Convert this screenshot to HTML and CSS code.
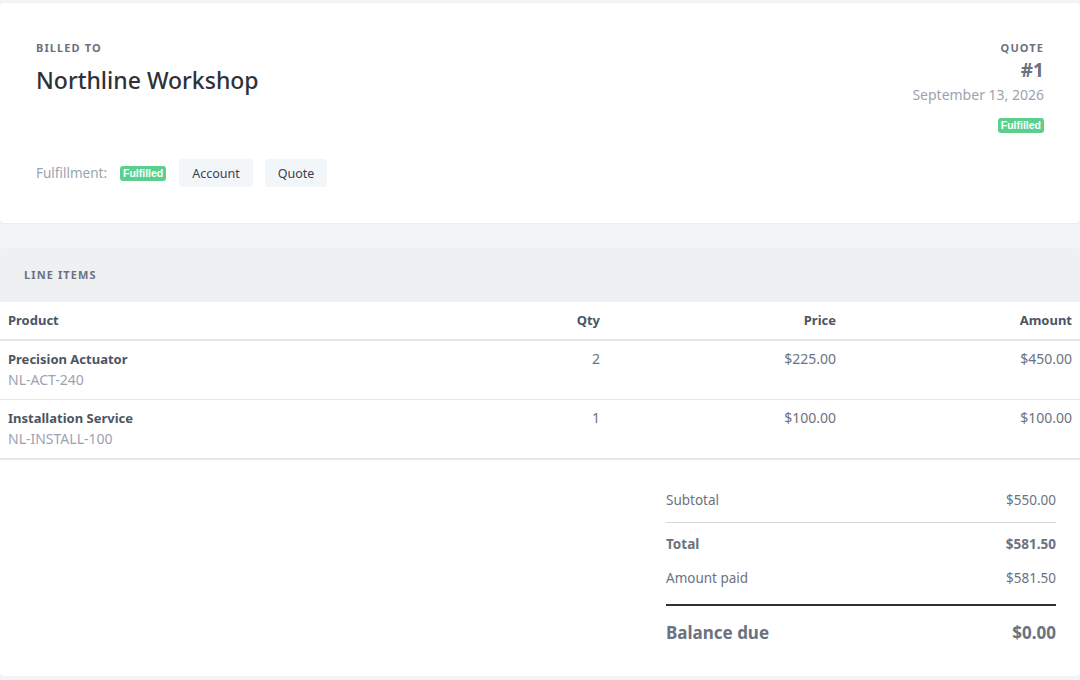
FILE: index.html
```html
<!DOCTYPE html>
<html>
<head>
<meta charset="utf-8">
<link rel="stylesheet" href="styles.css">
</head>
<body>
<div class="page">
  <section class="card top">
    <div class="top-head">
      <div class="billed">
        <div class="eyebrow">BILLED TO</div>
        <h1 class="client">Northline Workshop</h1>
      </div>
      <div class="quote-meta">
        <div class="eyebrow">QUOTE</div>
        <div class="quote-no">#1</div>
        <div class="quote-date">September 13, 2026</div>
        <span class="badge">Fulfilled</span>
      </div>
    </div>
    <div class="fulfil-row">
      <span class="fulfil-label">Fulfillment:</span>
      <span class="badge">Fulfilled</span>
      <button class="btn">Account</button>
      <button class="btn">Quote</button>
    </div>
  </section>

  <section class="card items">
    <div class="items-head"><span class="eyebrow">LINE ITEMS</span></div>
    <table class="lines">
      <colgroup>
        <col class="c-prod"><col class="c-qty"><col class="c-price"><col class="c-amt">
      </colgroup>
      <thead>
        <tr><th class="l">Product</th><th class="r">Qty</th><th class="r">Price</th><th class="r">Amount</th></tr>
      </thead>
      <tbody>
        <tr>
          <td class="l"><div class="pname">Precision Actuator</div><div class="sku">NL-ACT-240</div></td>
          <td class="r num">2</td><td class="r num">$225.00</td><td class="r num">$450.00</td>
        </tr>
        <tr>
          <td class="l"><div class="pname">Installation Service</div><div class="sku">NL-INSTALL-100</div></td>
          <td class="r num">1</td><td class="r num">$100.00</td><td class="r num">$100.00</td>
        </tr>
      </tbody>
    </table>
    <div class="totals-wrap">
      <div class="totals">
        <div class="trow sub"><span>Subtotal</span><span>$550.00</span></div>
        <div class="trow total"><span>Total</span><span>$581.50</span></div>
        <div class="trow paid"><span>Amount paid</span><span>$581.50</span></div>
        <div class="trow due"><span>Balance due</span><span>$0.00</span></div>
      </div>
    </div>
  </section>
</div>
</body>
</html>
```

FILE: styles.css
```css
* { box-sizing: border-box; }
html, body { margin: 0; padding: 0; }
body {
  background: #f3f4f6;
  font-family: "Noto Sans", "Open Sans", sans-serif;
  color: #374151;
}
.page {
  padding-top: 3px;
  display: flex;
  flex-direction: column;
  gap: 25px;
}
.card {
  background: #fff;
  border-radius: 4px;
  box-shadow: 0 1px 2px rgba(0,0,0,0.04);
}
.top {
  padding: 38px 36px 0 36px;
  height: 220px;
}
.eyebrow {
  font-size: 11px;
  font-weight: 700;
  letter-spacing: 1.1px;
  color: #6b7280;
  line-height: 14px;
}
.top-head {
  display: flex;
  justify-content: space-between;
  align-items: flex-start;
}
.client {
  margin: 10px 0 0 0;
  font-size: 23px;
  font-weight: 500;
  color: #2d3139;
  line-height: 30px;
}
.quote-meta {
  display: flex;
  flex-direction: column;
  align-items: flex-end;
}
.quote-no {
  font-size: 19px;
  font-weight: 700;
  color: #6b7280;
  line-height: 24px;
  margin-top: 3px;
}
.quote-date {
  font-size: 14px;
  color: #9ca3af;
  line-height: 20px;
  margin-top: 3px;
}
.quote-meta .badge { margin-top: 13px; }
.badge {
  display: inline-block;
  background: #5bd08e;
  color: #fff;
  font-family: "Liberation Sans", Arial, sans-serif;
  font-weight: 700;
  font-size: 10.5px;
  line-height: 15px;
  padding: 0 3px;
  border-radius: 3px;
}
.fulfil-row {
  margin-top: 26px;
  display: flex;
  align-items: center;
  gap: 13px;
}
.fulfil-label {
  font-size: 13.5px;
  color: #9ca3af;
}
.btn {
  font-family: "Noto Sans", sans-serif;
  font-size: 12.5px;
  color: #374151;
  background: #f3f6f9;
  border: 0;
  border-radius: 3px;
  height: 28px;
  padding: 0 13px;
}
.fulfil-row .btn + .btn { margin-left: -1px; }
.items {
  height: 428px;
  overflow: hidden;
}
.items-head {
  background: #eef0f2;
  height: 54px;
  display: flex;
  align-items: center;
  padding-left: 24px;
}
.lines {
  width: 100%;
  border-collapse: collapse;
}
.c-qty { width: 120px; }
.c-price { width: 236px; }
.c-amt { width: 236px; }
.lines th {
  font-size: 13px;
  font-weight: 700;
  color: #4b5563;
  padding: 0 8px 1px 8px;
  height: 38px;
  border-bottom: 2px solid #e3e6ea;
}
.lines td {
  vertical-align: top;
  padding: 8px 8px 9px 8px;
  border-bottom: 1px solid #e3e6ea;
}
.lines tbody tr:last-child td { border-bottom: 2px solid #e3e6ea; }
.l { text-align: left; }
.r { text-align: right; }
.pname {
  font-size: 13px;
  font-weight: 700;
  color: #4b5563;
  line-height: 20px;
}
.sku {
  font-size: 14px;
  color: #9ca3af;
  line-height: 21px;
}
.num {
  font-size: 14px;
  color: #6b7280;
  line-height: 20px;
}
.totals-wrap {
  display: flex;
  justify-content: flex-end;
  padding: 20px 24px 0 0;
}
.totals {
  width: 390px;
}
.trow {
  display: flex;
  justify-content: space-between;
  font-size: 13.5px;
  line-height: 20px;
  color: #6b7280;
}
.sub {
  padding: 10px 0 12px;
  border-bottom: 1px solid #d4d8de;
}
.total {
  padding: 11px 0 8px;
  font-weight: 700;
}
.paid {
  padding: 6px 0 16px;
  border-bottom: 2px solid #2f3338;
}
.due {
  padding: 16px 0 14px;
  font-size: 17px;
  line-height: 22px;
  font-weight: 700;
}
```
